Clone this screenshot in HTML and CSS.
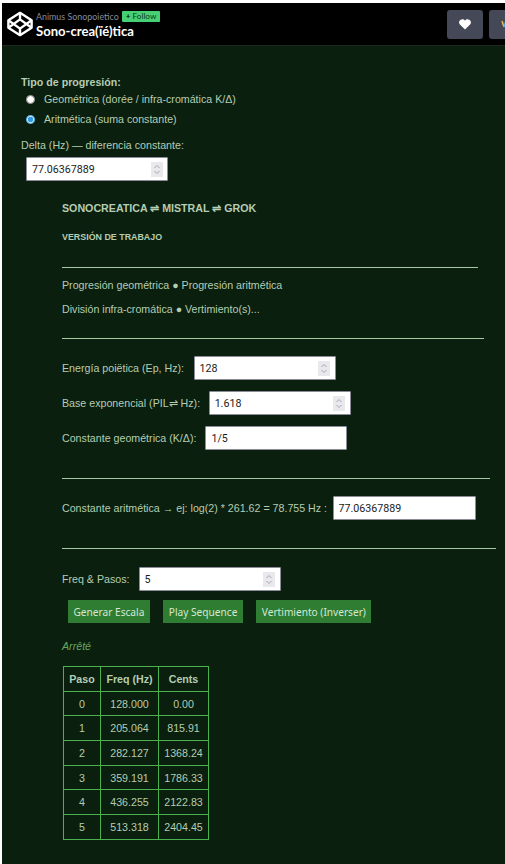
FILE: index.html
```html
<!DOCTYPE html>
<html lang="es">
<head>
<meta charset="utf-8">
<title>Sono-crea(ïé)tica</title>
<link rel="stylesheet" href="styles.css">
</head>
<body>
<header class="topbar">
  <svg class="logo" viewBox="0 0 28 28" fill="none" stroke="#fff" stroke-width="2.6" stroke-linejoin="round">
    <path d="M14 2 26.500 10v8L14 26 1.500 18v-8Z"/>
    <path d="M14 2v7M14 19v7M1.500 10 14 19l12.500-9M1.500 18 14 9l12.500 9"/>
  </svg>
  <div class="titles">
    <div class="author"><span>Animus Sonopoietico</span><span class="follow"><span class="plus">+</span> Follow</span></div>
    <div class="pen-title">Sono-crea(ïé)tica</div>
  </div>
  <div class="actions">
    <button class="action" type="button" aria-label="Love">
      <svg class="heart" viewBox="0 0 12 11" fill="#fff"><path d="M6 10.600.9 5.600C-.4 4.200-.1 1.900 1.400.9 2.900-.1 4.900.2 6 1.700 7.100.2 9.100-.1 10.600.9c1.500 1 1.800 3.300.5 4.700Z"/></svg>
    </button>
    <button class="action view" type="button" aria-label="View">
      <svg class="view-mark" viewBox="0 0 8 8" fill="none" stroke-width="1.600"><path d="M1 1 3 7" stroke="#e6b84a"/><path d="M5 1 3 7" stroke="#5aa6dc"/></svg>
    </button>
  </div>
</header>
<main class="page">
  <section class="mode">
    <div class="mode-title">Tipo de progresión:</div>
    <label class="radio-row"><input type="radio" name="mode"> Geométrica (dorée / infra-cromática K/Δ)</label>
    <label class="radio-row"><input type="radio" name="mode" checked> Aritmética (suma constante)</label>
    <div class="delta-label">Delta (Hz) — diferencia constante:</div>
    <input class="field delta-input" type="number" step="any" value="77.06367889">
  </section>
  <section class="work">
    <h2 class="heading">SONOCREATICA ⇌ MISTRAL ⇌ GROK</h2>
    <h3 class="subheading">VERSIÓN DE TRABAJO</h3>
    <hr class="rule rule-1">
    <p class="line first-line">Progresión geométrica ● Progresión aritmética</p>
    <p class="line">División infra-cromática ● Vertimiento(s)...</p>
    <hr class="rule rule-2">
    <div class="row row-energy"><label>Energía poiëtica (Ep, Hz):</label><input class="field" type="number" step="any" value="128"></div>
    <div class="row row-base"><label>Base exponencial (PIL⇌ Hz):</label><input class="field" type="number" step="any" value="1.618"></div>
    <div class="row"><label>Constante geométrica (K/Δ):</label><input class="field" type="text" value="1/5"></div>
    <hr class="rule rule-3">
    <div class="row row-arith"><label>Constante aritmética → ej: log(2) * 261.62 = 78.755 Hz :</label><input class="field arith-input" type="text" value="77.06367889"></div>
    <hr class="rule rule-4">
    <div class="row row-steps"><label>Freq &amp; Pasos:</label><input class="field" type="number" value="5"></div>
    <div class="buttons">
      <button class="btn" type="button">Generar Escala</button>
      <button class="btn" type="button">Play Sequence</button>
      <button class="btn" type="button">Vertimiento (Inverser)</button>
    </div>
    <p class="status">Arrêté</p>
    <table class="scale">
      <thead><tr><th class="c1">Paso</th><th class="c2">Freq (Hz)</th><th class="c3">Cents</th></tr></thead>
      <tbody>
        <tr><td>0</td><td>128.000</td><td>0.00</td></tr>
        <tr><td>1</td><td>205.064</td><td>815.91</td></tr>
        <tr><td>2</td><td>282.127</td><td>1368.24</td></tr>
        <tr><td>3</td><td>359.191</td><td>1786.33</td></tr>
        <tr><td>4</td><td>436.255</td><td>2122.83</td></tr>
        <tr><td>5</td><td>513.318</td><td>2404.45</td></tr>
      </tbody>
    </table>
  </section>
</main>
</body>
</html>
```
FILE: styles.css
```css
* { box-sizing: border-box; }
html, body { margin: 0; height: 864px; overflow: hidden; }
body {
  background: #fff;
  padding: 3px 0 0 2px;
  font-family: "Liberation Sans", Arial, sans-serif;
  font-size: 10.67px;
  color: #b5cdb3;
}
.topbar {
  height: 43px;
  width: 503px;
  background: #000;
  border-bottom: 1px solid #1c2a1e;
  display: flex;
  align-items: center;
  padding-left: 5px;
  font-family: Lato, sans-serif;
  overflow: hidden;
}
.logo { width: 26px; height: 26px; flex: none; }
.titles { margin-left: 3px; flex: 1; padding-top: 2px; }
.author { display: flex; align-items: center; font-size: 8.900px; color: #868a9a; line-height: 11px; }
.follow {
  background: #47cf73;
  color: #0d3a1c;
  font-size: 8.200px;
  line-height: 11px;
  padding: 0 4px;
  border-radius: 1px;
  margin-left: 3px;
}
.plus { font-weight: 700; color: #06130a; }
.pen-title { font-size: 13.100px; font-weight: 700; color: #fff; line-height: 16px; margin-top: 1px; }
.actions { display: flex; gap: 6px; flex: none; margin-right: -20px; }
.action {
  width: 36px;
  height: 29px;
  background: #444857;
  border: 0;
  border-radius: 3px;
  padding: 0;
  display: flex;
  align-items: center;
  justify-content: center;
}
.heart { width: 12px; height: 11px; }
.view { justify-content: flex-start; padding-left: 12px; }
.view-mark { width: 8px; height: 8px; }
.page {
  width: 503px;
  height: 818px;
  background: #0a1f0d;
  padding: 30px 0 0 19px;
}
.mode-title { font-weight: 700; line-height: 13px; }
.radio-row { display: flex; align-items: center; gap: 9px; height: 20px; }
.radio-row input { margin: 0 0 0 5px; width: 9px; height: 9px; flex: none; accent-color: #2f9be0; }
.delta-label { margin-top: 10px; line-height: 13px; }
.field {
  height: 24px;
  width: 142px;
  border: 1px solid #8b8b9a;
  border-radius: 1px;
  background: #fff;
  color: #1b1b1b;
  font-family: Roboto, sans-serif;
  font-size: 10.67px;
  padding: 0 5px;
  flex: none;
}
.field::-webkit-inner-spin-button {
  -webkit-appearance: none;
  appearance: none;
  opacity: 1;
  width: 12px;
  height: 15px;
  margin-right: -0.5px;
  background: #e9e9ed url("data:image/svg+xml,%3Csvg xmlns='http://www.w3.org/2000/svg' width='12' height='15'%3E%3Cpath d='M3.500 6 6 3.500 8.500 6M3.500 9 6 11.500 8.500 9' fill='none' stroke='%23a5a5ad' stroke-width='1'/%3E%3C/svg%3E") center no-repeat;
}
.delta-input { display: block; margin: 5px 0 0 5px; }
.work { margin-left: 41px; margin-top: 20px; }
.heading { margin: 0; font-size: 10.67px; font-weight: 700; line-height: 14px; }
.subheading { margin: 16px 0 0; font-size: 8.900px; font-weight: 700; line-height: 12px; }
.rule { border: 0; border-top: 1px solid #a5c8a5; margin: 0; height: 0; }
.rule-1 { width: 416px; margin-top: 24px; }
.rule-2 { width: 422px; margin-top: 22px; }
.rule-3 { width: 428px; margin-top: 28px; }
.rule-4 { width: 434px; margin-top: 28px; }
.line { margin: 0; line-height: 13px; }
.first-line { margin-top: 11px; }
.line + .line { margin-top: 11px; }
.row { display: flex; align-items: center; gap: 9px; margin-top: 11px; }
.row-energy { margin-top: 17px; gap: 9.500px; }
.row-base { gap: 8.500px; }
.row-arith { margin-top: 17px; gap: 5.500px; }
.arith-input { width: 143px; }
.row-steps { margin-top: 18px; gap: 9px; }
.buttons { display: flex; gap: 13.500px; margin-top: 9px; margin-left: 6px; }
.btn {
  height: 23px;
  background: #2e7d32;
  color: #d5e8d4;
  border: 0;
  padding: 0 5.500px;
  font-family: "Noto Sans", sans-serif;
  font-size: 10.150px;
}
.status { margin: 17px 0 0; color: #67a661; font-style: italic; line-height: 13px; }
.scale {
  border-collapse: collapse;
  margin-top: 13px;
  margin-left: 1px;
  text-align: center;
}
.scale th, .scale td { border: 1px solid #4caf50; padding: 0; height: 24.700px; }
.c1 { width: 37px; }
.c2 { width: 58px; }
.c3 { width: 50px; }
```
